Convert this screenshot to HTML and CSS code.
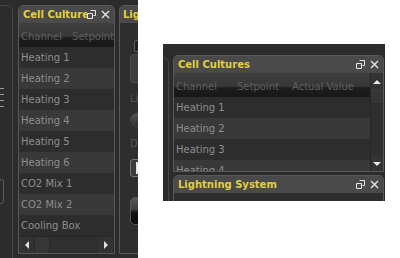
FILE: index.html
```html
<!DOCTYPE html>
<html lang="en">
<head>
    <meta charset="UTF-8">
    <title>Cell Cultures</title>
    <link rel="stylesheet" href="styles.css">
</head>
<body>
    <div class="shot">
        <div class="side">
            <div class="ticks"><i></i><i></i><i></i><i></i></div>
            <div class="stub"></div>
        </div>

        <div class="dock cell">
            <div class="titlebar">
                <span class="title">Cell Cultures</span>
                <span class="icons">
                    <svg width="9" height="9" viewBox="0 0 9 9"><path d="M3.5 0.5h5v5h-2M0.5 3.5h5v5h-5z" fill="none" stroke="#e6e6e6" stroke-width="1"/></svg>
                    <svg width="9" height="9" viewBox="0 0 9 9"><path d="M1 1l7 7M8 1l-7 7" stroke="#e6e6e6" stroke-width="1.4"/></svg>
                </span>
            </div>
            <div class="thead">
                <span class="c1">Channel</span><span>Setpoint</span>
            </div>
            <div class="row">Heating 1</div>
            <div class="row alt">Heating 2</div>
            <div class="row">Heating 3</div>
            <div class="row alt">Heating 4</div>
            <div class="row">Heating 5</div>
            <div class="row alt">Heating 6</div>
            <div class="row">CO2 Mix 1</div>
            <div class="row alt">CO2 Mix 2</div>
            <div class="row">Cooling Box</div>
            <div class="hscroll">
                <div class="sbtn"><span class="tri left"></span></div>
                <div class="thumb"></div>
                <div class="track"></div>
                <div class="sbtn"><span class="tri right"></span></div>
            </div>
        </div>

        <div class="dock light">
            <div class="titlebar">
                <span class="title">Lightning System</span>
            </div>
            <div class="controls">
                <div class="check"></div>
                <div class="pbtn"></div>
                <div class="lbl">Light</div>
                <div class="knob"></div>
                <div class="lbl">Dimmer</div>
                <div class="spin"><i></i></div>
                <div class="bigbtn"></div>
            </div>
        </div>
    </div>

    <div class="zoom">
        <div class="zframe"></div>
        <div class="zmain">
            <div class="dock cell2">
                <div class="titlebar">
                    <span class="title">Cell Cultures</span>
                    <span class="icons">
                        <svg width="9" height="9" viewBox="0 0 9 9"><path d="M3.5 0.5h5v5h-2M0.5 3.5h5v5h-5z" fill="none" stroke="#e6e6e6" stroke-width="1"/></svg>
                        <svg width="9" height="9" viewBox="0 0 9 9"><path d="M1 1l7 7M8 1l-7 7" stroke="#e6e6e6" stroke-width="1.4"/></svg>
                    </span>
                </div>
                <div class="tablewrap">
                    <div class="table">
                        <div class="thead">
                            <span class="c1">Channel</span><span class="c2">Setpoint</span><span>Actual Value</span>
                        </div>
                        <div class="row">Heating 1</div>
                        <div class="row alt">Heating 2</div>
                        <div class="row">Heating 3</div>
                        <div class="row alt">Heating 4</div>
                    </div>
                    <div class="vscroll">
                        <div class="vbtn"><span class="tri up"></span></div>
                        <div class="vthumb"></div>
                        <div class="vtrack"></div>
                        <div class="vbtn"><span class="tri down"></span></div>
                    </div>
                </div>
            </div>
            <div class="dock light2">
                <div class="titlebar">
                    <span class="title">Lightning System</span>
                    <span class="icons">
                        <svg width="9" height="9" viewBox="0 0 9 9"><path d="M3.5 0.5h5v5h-2M0.5 3.5h5v5h-5z" fill="none" stroke="#e6e6e6" stroke-width="1"/></svg>
                        <svg width="9" height="9" viewBox="0 0 9 9"><path d="M1 1l7 7M8 1l-7 7" stroke="#e6e6e6" stroke-width="1.4"/></svg>
                    </span>
                </div>
            </div>
        </div>
    </div>
</body>
</html>
```

FILE: styles.css
```css
* {
    box-sizing: border-box;
}

body {
    margin: 0;
    height: 258px;
    overflow: hidden;
    background-color: #ffffff;
    font-family: "DejaVu Sans", sans-serif;
    font-size: 10px;
    display: flex;
    align-items: flex-start;
}

/* left screenshot */
.shot {
    width: 138px;
    height: 258px;
    flex-shrink: 0;
    background-color: #2c2c2c;
    padding-top: 5px;
    display: flex;
    overflow: hidden;
}

.side {
    flex-shrink: 0;
    width: 23px;
    height: 270px;
    margin-left: -10px;
    border: 1px solid #474747;
    border-radius: 6px;
    padding: 82px 0 0 9px;
    display: flex;
    flex-direction: column;
}

.ticks {
    display: flex;
    flex-direction: column;
    gap: 5px;
}

.ticks i {
    display: block;
    width: 4px;
    height: 1px;
    background-color: #9a9a9a;
}

.stub {
    margin: 72px 0 0 -6px;
    width: 10px;
    height: 25px;
    border: 1px solid #5a5a5a;
    border-radius: 3px;
}

.dock {
    flex-shrink: 0;
    border: 1px solid #585858;
    border-radius: 5px 5px 0 0;
    background-color: #2e2e2e;
    display: flex;
    flex-direction: column;
    overflow: hidden;
}

.titlebar {
    height: 17px;
    flex-shrink: 0;
    background-color: #4a4a4a;
    display: flex;
    align-items: center;
    padding: 0 4px 1px 4px;
}

.title {
    flex: 1;
    min-width: 0;
    overflow: hidden;
    white-space: nowrap;
    font-weight: bold;
    color: #e2cf3f;
}

.icons {
    flex-shrink: 0;
    display: flex;
    gap: 5px;
    padding-top: 1px;
}

.icons svg {
    display: block;
}

.thead {
    height: 24px;
    flex-shrink: 0;
    display: flex;
    align-items: center;
    padding: 3px 0 0 2px;
    white-space: nowrap;
    color: #5f5f5f;
    background: linear-gradient(#3e3e3e, #373737 55%, #1d1d1d 62%, #181818);
}

.row {
    height: 21px;
    flex-shrink: 0;
    line-height: 21px;
    padding-left: 2px;
    white-space: nowrap;
    color: #8e8e8e;
    background-color: #2d2d2d;
}

.row.alt {
    background-color: #393939;
}

.cell {
    width: 97px;
    height: 249px;
    margin-left: 5px;
}

.cell .thead .c1 {
    width: 68px;
}

.hscroll {
    height: 17px;
    flex-shrink: 0;
    display: flex;
    background-color: #2f2f2f;
    border-top: 1px solid #262626;
}

.sbtn {
    width: 16px;
    display: flex;
    align-items: center;
    justify-content: center;
    background-color: #333333;
    border-right: 1px solid #2a2a2a;
}

.thumb {
    width: 15px;
    background-color: #363636;
    border-right: 1px solid #2a2a2a;
}

.track {
    flex: 1;
}

.tri {
    width: 0;
    height: 0;
}

.tri.left {
    border-top: 4px solid transparent;
    border-bottom: 4px solid transparent;
    border-right: 4px solid #e0e0e0;
}

.tri.right {
    border-top: 4px solid transparent;
    border-bottom: 4px solid transparent;
    border-left: 4px solid #e0e0e0;
}

.tri.up {
    border-left: 4px solid transparent;
    border-right: 4px solid transparent;
    border-bottom: 4px solid #e8e8e8;
}

.tri.down {
    border-left: 4px solid transparent;
    border-right: 4px solid transparent;
    border-top: 4px solid #e8e8e8;
}

.light {
    width: 100px;
    height: 249px;
    margin-left: 4px;
}

.light .titlebar {
    padding-left: 3px;
}

.controls {
    flex: 1;
    display: flex;
    flex-direction: column;
    padding-left: 10px;
    background-color: #2e2e2e;
}

.check {
    margin: 17px 0 0 4px;
    width: 12px;
    height: 12px;
    border: 1px solid #5c5c5c;
    border-radius: 2px;
    background-color: #232323;
}

.pbtn {
    margin-top: 2px;
    width: 40px;
    height: 29px;
    border: 1px solid #4c4c4c;
    border-radius: 4px;
    background-color: #3e3e3e;
}

.lbl {
    margin-top: 10px;
    height: 12px;
    color: #555555;
    white-space: nowrap;
}

.knob {
    margin-top: 7px;
    width: 20px;
    height: 16px;
    border-radius: 50%;
    background: linear-gradient(#555555, #2e2e2e);
    border: 1px solid #444444;
}

.spin {
    margin-top: 9px;
    width: 40px;
    height: 18px;
    border: 1px solid #777777;
    border-radius: 3px;
    background-color: #3c3c3c;
    padding: 2px 0 0 5px;
}

.spin i {
    display: block;
    width: 5px;
    height: 12px;
    background-color: #e8e8e8;
}

.bigbtn {
    margin-top: 20px;
    width: 40px;
    height: 28px;
    border: 1px solid #555555;
    border-radius: 5px;
    background: linear-gradient(#5a5a5a, #3a3a3a 45%, #141414 55%, #0c0c0c);
}

/* right enlarged part */
.zoom {
    width: 222px;
    height: 157px;
    margin: 44px 0 0 25px;
    flex-shrink: 0;
    background-color: #2c2c2c;
    padding-top: 11px;
    display: flex;
    overflow: hidden;
}

.zframe {
    flex-shrink: 0;
    width: 16px;
    height: 160px;
    margin: 2px 0 0 -10px;
    border: 1px solid #464646;
    border-radius: 6px;
}

.zmain {
    margin-left: 4px;
    width: 211px;
    display: flex;
    flex-direction: column;
    gap: 3px;
}

.cell2 {
    width: 211px;
    height: 117px;
}

.tablewrap {
    height: 99px;
    flex-shrink: 0;
    display: flex;
}

.table {
    flex: 1;
    display: flex;
    flex-direction: column;
    overflow: hidden;
    border-bottom: 1px solid #6a6a6a;
}

.cell2 .thead .c1 {
    width: 61px;
}

.cell2 .thead .c2 {
    width: 55px;
}

.vscroll {
    width: 13px;
    flex-shrink: 0;
    display: flex;
    flex-direction: column;
    background-color: #323232;
    border-left: 1px solid #262626;
}

.vbtn {
    height: 17px;
    display: flex;
    align-items: center;
    justify-content: center;
    background-color: #333333;
}

.vthumb {
    height: 14px;
    border-top: 1px solid #3c3c3c;
    border-bottom: 1px solid #2a2a2a;
    background-color: #363636;
}

.vtrack {
    flex: 1;
    background-color: #2f2f2f;
}

.light2 {
    width: 211px;
    height: 40px;
}
```
